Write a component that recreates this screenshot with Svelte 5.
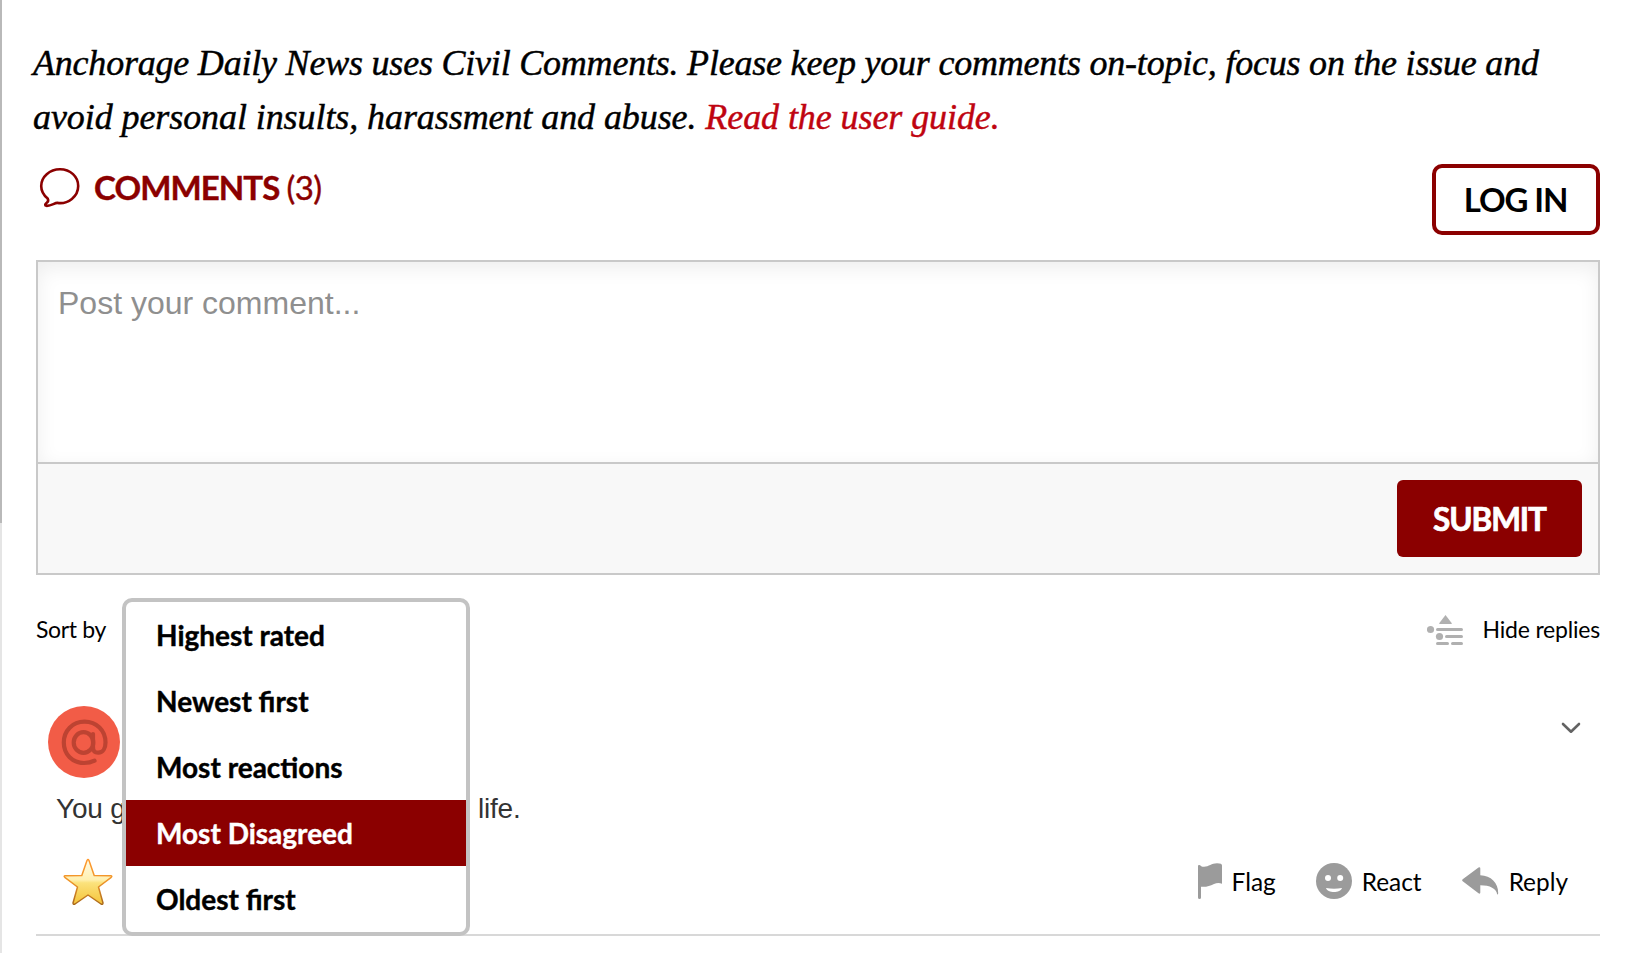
<script>
  const options = ['Highest rated', 'Newest first', 'Most reactions', 'Most Disagreed', 'Oldest first'];
  let selected = $state('Most Disagreed');
</script>

<div class="page">
  <p class="intro">
    <span class="l1">Anchorage Daily News uses Civil Comments. Please keep your comments on-topic, focus on the issue and</span>
    <span class="l2">avoid personal insults, harassment and abuse. <a href="#guide">Read the user guide.</a></span>
  </p>

  <header class="head">
    <h2 class="title">
      <svg width="42" height="42" viewBox="0 0 42 42" fill="none" stroke="#8b0000" stroke-width="2.6" stroke-linejoin="round">
        <path d="M21 2.3C31.400 2.300 39.200 9.700 39.200 19C39.200 29.500 29.200 37.300 18.500 35.900C15.600 35.700 12 39.300 7.200 38.800C5.700 38.500 6 37.200 7.500 36C9.500 34.500 9.500 33 8.700 31.600C4.600 28.200 2.200 24 2.200 19C2.200 9.700 10.700 2.300 21 2.300Z" />
      </svg>
      <b>COMMENTS</b><span class="count">(3)</span>
    </h2>
    <button class="login"><span>LOG IN</span></button>
  </header>

  <section class="editor">
    <div class="field">Post your comment...</div>
    <div class="bar"><button class="submit"><span>SUBMIT</span></button></div>
  </section>

  <div class="tools">
    <div class="sort">
      <span class="sortlabel">Sort by</span>
      <ul class="menu">
        {#each options as option}
          <li class:on={option === selected}><button onclick={() => (selected = option)}><span>{option}</span></button></li>
        {/each}
      </ul>
    </div>
    <div class="hide">
      <svg width="36" height="32" viewBox="0 0 36 32" fill="#b0b0b0">
        <path d="M18.500 1L24.800 9.200Q25 10 24.200 10H12.800Q12 10 12.200 9.200Z" />
        <circle cx="3.500" cy="15.500" r="3.600" /><circle cx="12.500" cy="22.500" r="3.600" />
        <rect x="9" y="14" width="27" height="3" rx="1.500" />
        <rect x="18" y="21" width="18" height="3" rx="1.500" />
        <rect x="9" y="28" width="13" height="3" rx="1.500" />
        <rect x="24" y="28" width="12" height="3" rx="1.500" />
      </svg>
      <span>Hide replies</span>
    </div>
  </div>

  <article class="comment">
    <div class="top">
      <svg width="72" height="72" viewBox="0 0 72 72">
        <circle cx="36" cy="36" r="36" fill="#f25c47" />
        <g fill="none" stroke="#bd4332" stroke-width="4.200" stroke-linecap="round">
          <ellipse cx="35.500" cy="36.500" rx="9.800" ry="10.300" />
          <path d="M45 28V41C45 45.500 47 46.700 50.300 46.700C55 46.700 57.500 42 57.500 36.500C57.500 24.500 48.500 15.700 36.500 15.700C24.500 15.700 15.800 25 15.800 36.500C15.800 48.500 24.500 57 36 57Q42 57 46.500 54.700" />
        </g>
      </svg>
      <svg class="chev" width="20" height="12" viewBox="0 0 20 12" fill="none" stroke="#636363" stroke-width="2.600" stroke-linecap="round" stroke-linejoin="round">
        <path d="M2 2L10 9.700L18 2" />
      </svg>
    </div>
    <div class="body"><span class="start">You g</span><span>life.</span></div>
    <div class="actions">
      <svg class="star" width="50" height="50" viewBox="0 0 50 50">
        <defs>
          <linearGradient id="gold" x1="0" y1="0" x2="0" y2="1">
            <stop offset="0" stop-color="#fffbe9" /><stop offset=".45" stop-color="#fff0b0" />
            <stop offset=".52" stop-color="#fbe27c" /><stop offset="1" stop-color="#f5c338" />
          </linearGradient>
          <linearGradient id="rim" x1="0" y1="0" x2="0" y2="1">
            <stop offset="0" stop-color="#ff9a2e" /><stop offset=".5" stop-color="#ee9428" /><stop offset="1" stop-color="#a9691c" />
          </linearGradient>
        </defs>
        <path d="M24 2.500Q25 .5 26 2.500L31.200 17.500L48 17.700Q49.500 18.200 48.200 19.300L35.500 29L40 45Q39.800 47 38 46L25 37L12 46Q10.200 47 10 45L14.500 29L1.800 19.300Q.5 18.200 2 17.700L18.800 17.500Z" fill="url(#gold)" stroke="url(#rim)" stroke-width="1.500" stroke-linejoin="round" />
      </svg>
      <div class="links">
        <button class="flag">
          <svg width="24" height="36" viewBox="0 0 24 36" fill="#9b9b9b">
            <path d="M0 3Q0 1.700 1.500 2C3 2.200 2.500 4 6 3.800C11 3.500 13.500 .2 19 .2C22.500 .2 24 1 24 2.500V20.700C21 19.500 18.500 20 16 21C11.500 23 8 24.300 3 23.700V34.500Q3 36 1.500 36Q0 36 0 34.500Z" />
          </svg>
          <span>Flag</span>
        </button>
        <button class="react">
          <svg width="36" height="36" viewBox="0 0 36 36">
            <circle cx="18" cy="18" r="18" fill="#9b9b9b" />
            <circle cx="12" cy="15" r="3" fill="#fff" /><circle cx="24.200" cy="15" r="3" fill="#fff" />
            <path d="M10 25Q18 26.500 26 25C24.500 30.300 11.500 30.300 10 25Z" fill="#fff" />
          </svg>
          <span>React</span>
        </button>
        <button class="reply">
          <svg width="37" height="28" viewBox="0 0 37 28" fill="#9b9b9b">
            <path d="M.7 12.300L16.500 .4Q18.300 -.4 18.300 1.500V8.300C29 8.500 36.200 16 36.200 26Q36.200 27.700 35.200 27.400C34.500 21.500 28 18.200 18.300 18.200V25.500Q18.300 27.300 16.500 26.300L.7 14.300Q-.4 13.300 .7 12.300Z" />
          </svg>
          <span>Reply</span>
        </button>
      </div>
    </div>
  </article>
</div>

<style>
  :global(body) { background: #fff; }
  .page {
    box-sizing: border-box; width: 1642px; height: 953px; overflow: hidden;
    padding: 36px 42px 0 34px; border-left: 2px solid;
    border-image: linear-gradient(#b9b9b9 0 523px, #e5e5e5 523px) 0 0 0 2;
    font-family: Lato, sans-serif; color: #000; background: #fff;
  }
  button { font: inherit; color: inherit; background: none; border: 0; padding: 0; margin: 0; display: flex; align-items: center; }
  span, b { white-space: nowrap; }
  svg { display: block; flex: none; }
  .intro { margin: 0 0 0 -3px; font: italic 36px/54px "Liberation Serif", serif; height: 108px; -webkit-text-stroke: .45px currentColor; }
  .intro > span { display: block; width: max-content; }
  .l1 { letter-spacing: -.21px; }
  .l2 { letter-spacing: -.08px; }
  .intro a { color: #bf0410; text-decoration: none; }
  .head { display: flex; justify-content: space-between; align-items: flex-start; padding-top: 20px; height: 116px; box-sizing: border-box; }
  .title { display: flex; align-items: center; margin: 3px 0 0 3px; font-size: 33px; line-height: 42px; font-weight: 400; color: #8b0000; }
  .title b { margin: -2px 0 0 13px; font-weight: 700; letter-spacing: -.9px; -webkit-text-stroke: .4px currentColor; }
  .count { margin: -2px 0 0 7px; letter-spacing: -.5px; -webkit-text-stroke: .4px currentColor; }
  .login { box-sizing: border-box; width: 168px; height: 71px; border: 4px solid #8b0000; border-radius: 10px; justify-content: center; font-size: 33px; font-weight: 700; letter-spacing: -1.1px; }
  .login span { margin: -1px 0 0 -1px; }
  .editor { border: 2px solid #c9c9c9; height: 315px; box-sizing: border-box; display: flex; flex-direction: column; }
  .field { box-sizing: border-box; height: 200px; padding: 21px 20px; font: 32px/40px "Liberation Sans", Arial, sans-serif; color: #8f8f8f; box-shadow: inset 0 6px 20px rgba(0,0,0,.07); }
  .bar { flex: 1; display: flex; justify-content: flex-end; align-items: center; padding-right: 16px; background: #f8f8f8; border-top: 2px solid #c9c9c9; }
  .submit { width: 185px; height: 77px; border-radius: 6px; background: #8b0000; color: #fff; justify-content: center; font-size: 31.5px; font-weight: 700; letter-spacing: -1.1px; -webkit-text-stroke: .7px currentColor; }
  .tools { display: flex; justify-content: space-between; height: 131px; font-size: 23px; letter-spacing: -.2px; line-height: 30px; padding-top: 39px; box-sizing: border-box; }
  .sort { position: relative; }
  .sortlabel { letter-spacing: -.35px; }
  .menu { position: absolute; z-index: 2; left: 86px; top: -16px; width: 348px; height: 338px; box-sizing: border-box; border: 4px solid #c3c3c3; border-radius: 10px; background: #fff; list-style: none; margin: 0; padding: 0; font-size: 28px; font-weight: 700; letter-spacing: .02px; -webkit-text-stroke: .4px currentColor; }
  .menu button { height: 66px; width: 100%; padding-left: 30px; }
  .menu .on { background: #8b0000; color: #fff; }
  .hide { display: flex; align-items: flex-start; gap: 20px; }
  .comment { border-bottom: 2px solid #d8d8d8; height: 230px; box-sizing: border-box; }
  .top { display: flex; justify-content: space-between; align-items: flex-start; padding-left: 12px; }
  .chev { margin: 16px 19px 0 0; }
  .body { display: flex; padding: 4px 0 0 20px; height: 58px; box-sizing: border-box; align-items: center; font: 28px/34px "Liberation Sans", Arial, sans-serif; color: #333; letter-spacing: -.2px; }
  .start { width: 422px; }
  .actions { display: flex; justify-content: space-between; padding: 22px 32px 0 27px; font-size: 24.4px; }
  .links { display: flex; align-items: center; margin-top: -4px; }
  .flag { gap: 10px; }
  .react { gap: 10px; margin-left: 40px; }
  .reply { gap: 10px; margin-left: 40px; }
</style>
